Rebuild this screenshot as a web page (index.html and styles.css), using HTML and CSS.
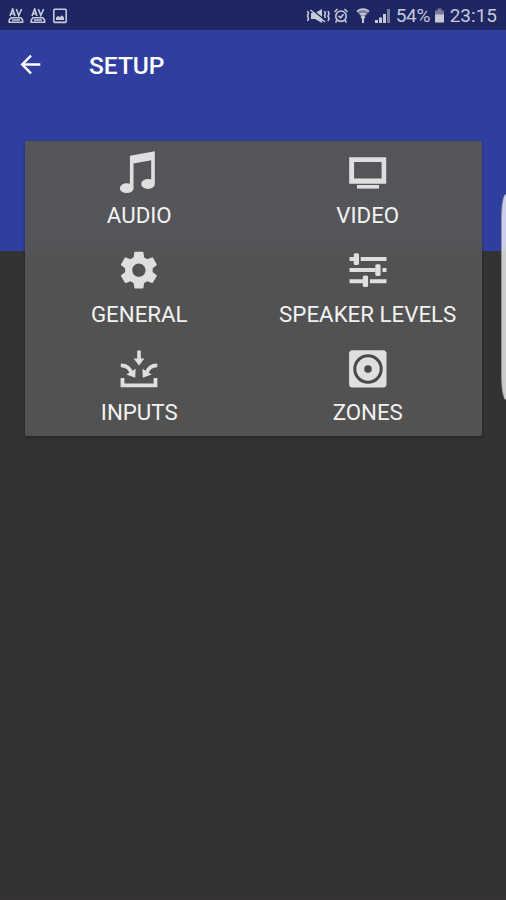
FILE: index.html
```html
<!DOCTYPE html>
<html lang="en">
<head>
  <meta charset="UTF-8">
  <title>Setup</title>
  <meta name="viewport" content="width=device-width, initial-scale=1.0">
  <link rel="stylesheet" href="styles.css">
</head>
<body>
  <div class="status-bar">
    <div class="status-left">
      <svg class="av" width="16" height="16" viewBox="0 0 16 16">
        <path class="line" d="M2 8L4.7 1L7 8M3 5.8H6.5M8.3 1L10.8 7.5L13.6 1"/>
        <path class="line" d="M3 9.8H12.8L14.6 12V14.2H1.2V12ZM4 12H12"/>
      </svg>
      <svg class="av" width="16" height="16" viewBox="0 0 16 16">
        <path class="line" d="M2 8L4.7 1L7 8M3 5.8H6.5M8.3 1L10.8 7.5L13.6 1"/>
        <path class="line" d="M3 9.8H12.8L14.6 12V14.2H1.2V12ZM4 12H12"/>
      </svg>
      <svg width="16" height="16" viewBox="0 0 16 16">
        <rect class="line" x="1.8" y="1.2" width="12.4" height="13.2" rx="1"/>
        <path d="M4 12V9.5L6 8L8 9L10 7.2L12 9.5V12Z"/>
      </svg>
    </div>
    <div class="status-right">
      <svg class="mute" width="24" height="18" viewBox="0 0 24 18">
        <path d="M5 6H9L16 2V16L9 12H5Z"/>
        <path class="cut" d="M5 1.8L20 14"/>
        <path class="line" d="M4.5 3L19 15M1.5 4L2.5 6.5L1.5 9L2.5 11.5L1.5 14M18.5 4L19.5 6L18.5 8.5L19.5 11M22 4L23 6.5L22 9L23 11.5L22 14"/>
      </svg>
      <svg class="alarm" width="16" height="18" viewBox="0 0 16 18">
        <circle class="line" cx="8" cy="9.2" r="5.2"/>
        <path class="line" d="M5.5 8.8L7.6 10.8L10.5 7.3M1.5 5L4.5 2M14.5 5L11.5 2M4 13.5L2.5 15.5M12 13.5L13.5 15.5"/>
      </svg>
      <svg class="wifi" width="14" height="18" viewBox="0 0 14 18">
        <path class="faint" d="M0.5 4.5Q7 -0.5 13.5 4.5L7 11Z"/>
        <path class="line" d="M1 4.3Q7 0 13 4.3M4 7.5Q7 5.8 10 7.5"/>
        <path d="M4.5 10L7 8L9.5 10L8 12V16H6V12Z"/>
      </svg>
      <svg class="signal" width="16" height="18" viewBox="0 0 16 18">
        <path d="M0 13H3V16H0ZM4 10.5H7V16H4ZM8 7H11V16H8Z"/>
        <path class="faint" d="M12 2H15V16H12Z"/>
      </svg>
      <span class="percent">54%</span>
      <svg class="battery" width="11" height="18" viewBox="0 0 11 18">
        <path class="faint" d="M3.5 1.5H7.5V3.5H10V8H1V3.5H3.5Z"/>
        <path d="M1 7.5H10V15.5H1Z"/>
      </svg>
      <span class="clock">23:15</span>
    </div>
  </div>

  <header class="toolbar">
    <svg width="22" height="22" viewBox="0 0 22 22">
      <path class="back" d="M21.3 10.5H3.5M12 1.7L3.2 10.5L12 19.3"/>
    </svg>
    <h1>SETUP</h1>
  </header>

  <main class="card">
    <div class="item">
      <svg width="44" height="48" viewBox="0 0 44 48">
        <path d="M12.9 7.8L37.8 3.3V36H34.2V12.2L16.5 15.5V40H12.9Z"/>
        <ellipse cx="9.7" cy="40.2" rx="6.8" ry="4.9"/>
        <ellipse cx="31" cy="36" rx="6.8" ry="4.9"/>
      </svg>
      <span>AUDIO</span>
    </div>
    <div class="item">
      <svg width="44" height="48" viewBox="0 0 44 48">
        <path fill-rule="evenodd" d="M3.2 9.2H40.2V35.7H3.2ZM8.1 14.1V30.6H35.6V14.1Z"/>
        <path d="M11 37H33V40.6H11Z"/>
      </svg>
      <span>VIDEO</span>
    </div>
    <div class="item">
      <svg width="44" height="48" viewBox="0 0 44 48">
        <path transform="translate(-.2 2.1) scale(1.84)" d="M19.43 12.98c.04-.32.07-.64.07-.98s-.03-.66-.07-.98l2.11-1.65c.19-.15.24-.42.12-.64l-2-3.46c-.12-.22-.39-.3-.61-.22l-2.49 1c-.52-.4-1.08-.73-1.69-.98l-.38-2.65C14.46 2.18 14.25 2 14 2h-4c-.25 0-.46.18-.49.42l-.38 2.65c-.61.25-1.17.59-1.69.98l-2.49-1c-.23-.09-.49 0-.61.22l-2 3.46c-.13.22-.07.49.12.64l2.11 1.65c-.04.32-.07.65-.07.98s.03.66.07.98l-2.11 1.65c-.19.15-.24.42-.12.64l2 3.46c.12.22.39.3.61.22l2.49-1c.52.4 1.08.73 1.69.98l.38 2.65c.03.24.24.42.49.42h4c.25 0 .46-.18.49-.42l.38-2.65c.61-.25 1.17-.59 1.69-.98l2.49 1c.23.09.49 0 .61-.22l2-3.46c.12-.22.07-.49-.12-.64l-2.11-1.65zM12 15.6c-1.98 0-3.6-1.62-3.6-3.6s1.62-3.6 3.6-3.6 3.6 1.62 3.6 3.6-1.62 3.6-3.6 3.6z"/>
      </svg>
      <span>GENERAL</span>
    </div>
    <div class="item">
      <svg width="44" height="48" viewBox="0 0 44 48">
        <path d="M3.5 11H8V15.1H3.5ZM14.7 11H40.5V15.1H14.7ZM3.5 22H29.5V26.1H3.5ZM36.5 22H40.5V26.1H36.5ZM3.5 33.2H17V37.3H3.5ZM23.9 33.2H40.5V37.3H23.9Z"/>
        <rect x="7.7" y="7.3" width="5.3" height="11.6" rx="1.5"/>
        <rect x="29.3" y="18.3" width="5.3" height="11.6" rx="1.5"/>
        <rect x="16.8" y="29.5" width="5.3" height="11.6" rx="1.5"/>
      </svg>
      <span>SPEAKER LEVELS</span>
    </div>
    <div class="item">
      <svg width="44" height="48" viewBox="0 0 44 48">
        <path d="M20.2 5.5H23.8V13.5H27.4L22 20.5L16.6 13.5H20.2Z"/>
        <path class="curve" d="M3.8 20.4Q12.5 20.4 14.7 29M40.2 20.4Q31.5 20.4 29.3 29"/>
        <path d="M9.4 29.4L18.6 23.8L18.2 32.8ZM34.6 29.4L25.4 23.8L25.8 32.8Z"/>
        <path d="M3.6 33H7.4V38.4H36.6V33H40.4V42.3H3.6Z"/>
      </svg>
      <span>INPUTS</span>
    </div>
    <div class="item">
      <svg width="44" height="48" viewBox="0 0 44 48">
        <rect x="3.1" y="5.2" width="37.4" height="37.4" rx="3.5"/>
        <circle class="ring" cx="22" cy="24" r="13.2"/>
        <circle class="dot" cx="22" cy="24" r="3.8"/>
      </svg>
      <span>ZONES</span>
    </div>
  </main>

  <div class="edge-handle"></div>
</body>
</html>
```

FILE: styles.css
```css
* {
  box-sizing: border-box;
}

body {
  margin: 0;
  height: 900px;
  position: relative;
  overflow: hidden;
  font-family: Roboto, sans-serif;
  background: linear-gradient(to bottom, #303f9f 251px, #333333 251px);
  border-bottom: 2px solid #3a3136;
}

svg {
  display: block;
  flex: none;
}

.status-bar {
  height: 30px;
  padding: 2px 9px 0 8px;
  display: flex;
  align-items: center;
  justify-content: space-between;
  background: #1e2764;
  color: #c8cad8;
  fill: #c8cad8;
  font-size: 19px;
  line-height: 30px;
}

.status-left,
.status-right {
  display: flex;
  align-items: center;
}

.status-left {
  gap: 6px;
}

.line {
  fill: none;
  stroke: #c8cad8;
  stroke-width: 1.6;
}

.cut {
  fill: none;
  stroke: #1e2764;
  stroke-width: 1.5;
}

.faint {
  fill: #777d9f;
}

.alarm {
  margin-left: 3px;
}

.wifi {
  margin-left: 7px;
}

.signal {
  margin-left: 5px;
}

.percent {
  margin-left: 5px;
  width: 34px;
  letter-spacing: -0.3px;
}

.battery {
  margin-left: 4px;
}

.clock {
  margin-left: 5px;
}

.toolbar {
  height: 111px;
  padding: 24px 0 0 19px;
  display: flex;
  align-items: flex-start;
  gap: 48px;
}

.toolbar h1 {
  margin: 0;
  color: #fff;
  font-size: 24.5px;
  font-weight: 500;
  line-height: 24px;
}

.back {
  fill: none;
  stroke: #fff;
  stroke-width: 2.4;
}

.card {
  width: 457px;
  height: 295px;
  margin-left: 25px;
  display: grid;
  grid-template-columns: 1fr 1fr;
  grid-template-rows: repeat(3, 1fr);
  background: linear-gradient(to bottom, #545559 0, #555659 95px, #525252 125px, #525252 100%);
  border-radius: 2px;
  box-shadow: 0 1px 3px rgba(0, 0, 0, 0.4);
}

.item {
  display: flex;
  flex-direction: column;
  align-items: center;
  padding-top: 7px;
  gap: 6.4px;
  color: #f2f2f2;
  fill: #dfdfdf;
  font-size: 22.3px;
  line-height: 26px;
  white-space: nowrap;
}

.curve {
  fill: none;
  stroke: #dfdfdf;
  stroke-width: 3.6;
}

.ring {
  fill: none;
  stroke: #484848;
  stroke-width: 3;
}

.dot {
  fill: #484848;
}

/* edge panel handle floating over the right side */
.edge-handle {
  position: absolute;
  top: 194px;
  right: 0;
  width: 5px;
  height: 206px;
  border-left: 1px solid rgba(120, 120, 130, 0.7);
  border-radius: 5px 0 0 5px / 24px 0 0 24px;
  background: rgba(255, 255, 255, 0.75);
}
```
